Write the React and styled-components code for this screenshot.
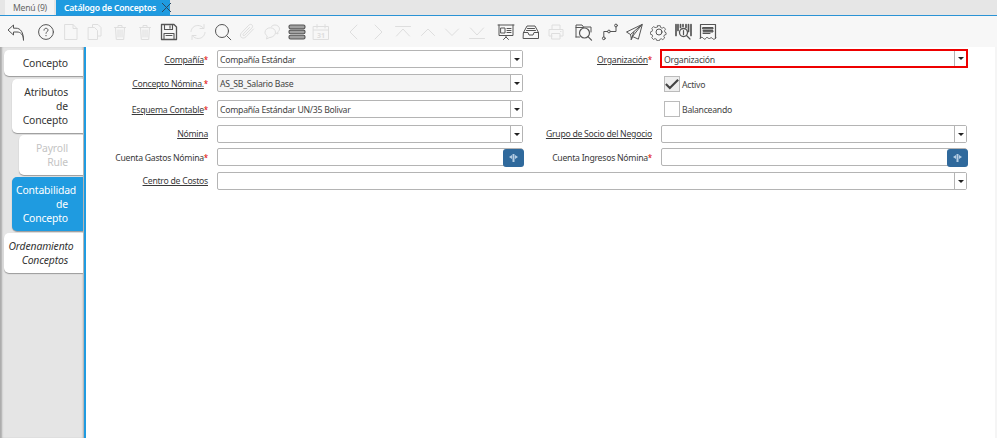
import React from "react";
import styled, { createGlobalStyle } from "styled-components";

const GlobalStyle = createGlobalStyle`
  html, body { margin: 0; padding: 0; height: 100%; background: #fff; overflow: hidden; }
  body { font-family: "Noto Sans", "Open Sans", sans-serif; color: #333; }
  #root { height: 438px; }
`;

const DARK = "#555";
const OFF = "#dedede";

const Svg = ({ on, size = 18, children }) => (
  <svg width={size} height={size} viewBox="0 0 18 18" fill="none" stroke={on ? DARK : OFF} strokeWidth="1" strokeLinecap="round" strokeLinejoin="round">
    {children}
  </svg>
);

const TOOLS = [
  { on: true, d: <path d="M16.500 17c0-5.500-3-8-6.500-8H6.500V12L1 7l5.500-5v3.200H9c4.500 0 7.500 4 7.500 11.800z" /> },
  { on: true, gap: 5.400, d: <><circle cx="9" cy="9" r="7.400" /><path d="M7 7.200c0-1.200 1-1.900 2-1.900s2 .7 2 1.800c0 1.600-2 1.600-2 3.200M9 12.400v.4" /></> },
  { d: <path d="M3 1.500h8l4 4v11H3zM11 1.500v4h4" /> },
  { d: <><path d="M6.500 4V1.500h5.500l3 3V13h-3" /><path d="M2.500 4.500h6l3 3v9h-9z" /></> },
  { d: <><path d="M3.500 4.500h11M7 4.500V2.500h4v2M4.500 4.500l.8 12h7.400l.8-12" /><path d="M7 7v7M9 7v7M11 7v7" /></> },
  { d: <><path d="M3.500 4.500h11M7 4.500V2.500h4v2M4.500 4.500l.8 12h7.400l.8-12" /><path d="M7 7v7M9 7v7M11 7v7" /></> },
  { on: true, d: <><path d="M1.500 1.500h12.500l2.500 2.500v12.500h-15z" strokeWidth="1.300" /><path d="M4.500 1.500v5h8v-5M10 2.800v2.400M4 16.500v-6h10v6M6 12.500h6" strokeWidth="1.100" /></> },
  { gap: 4.400, d: <><path d="M2 8.500C2.400 5 5.200 2.500 8.800 2.500c2.400 0 4.400 1 5.700 2.800M16 9.500c-.4 3.500-3.200 6-6.800 6-2.400 0-4.400-1-5.700-2.800" /><path d="M15 1.500v4h-4M3 16.500v-4h4" /></> },
  { on: true, d: <><circle cx="8" cy="8" r="6.500" /><path d="m12.800 12.800 4 4" /></> },
  { d: <path d="M15.500 6 8 13.800c-1.500 1.500-3.600 1.600-4.800.5-1.200-1.200-1-3.200.4-4.600l7.200-7.500c1-1 2.400-1.100 3.200-.3.9.9.7 2.200-.2 3.200L6.800 12.200c-.5.5-1.200.6-1.600.2-.4-.4-.3-1.100.2-1.600L11.500 4.500" /> },
  { d: <><path d="M6.500 14.500 3.500 16l.7-3C2.800 12 2 10.700 2 9.300 2 6.700 4.500 4.800 7.300 4.800s5.200 1.900 5.200 4.500-2.300 4.800-5.200 5.200z" /><path d="M8.500 3.400C9.400 2.500 10.700 2 12 2c2.500 0 4.500 1.700 4.500 3.900 0 1.300-.7 2.400-1.800 3.100l.3 2-2.200-1" /></> },
  { on: true, d: <><rect x="1" y="2" width="16" height="3.700" rx="1.500" fill="#a0a0a0" strokeWidth="1.100" /><rect x="1" y="7.100" width="16" height="3.700" rx="1.500" fill="#a0a0a0" strokeWidth="1.100" /><rect x="1" y="12.300" width="16" height="3.700" rx="1.500" fill="#a0a0a0" strokeWidth="1.100" /></> },
  { d: <><path d="M1.500 3.500h15v13h-15zM1.500 7h15M5 1.500v3.500M13 1.500v3.500" /><text x="9" y="14.800" fontSize="7" fontWeight="700" fill={OFF} stroke="none" textAnchor="middle">31</text></> },
  { gap: 8, d: <path d="M12 2 5 9l7 7" /> },
  { d: <path d="m6 2 7 7-7 7" /> },
  { d: <path d="M1.500 3.500h15M2.500 13 9 6l6.500 7" /> },
  { d: <path d="M2.500 12.500 9 6l6.500 6.500" /> },
  { d: <path d="M2.500 6 9 12.500 15.500 6" /> },
  { d: <path d="M1.500 15.500h15M2.500 5 9 12l6.500-7" /> },
  { on: true, gap: 5, d: <><path d="M1 2h16M2 2v10.500h14V2M9 12.500v1.500M6.500 16.500 9 14l2.500 2.500" /><path d="M4 5h4v5H4zM10 5.500h4M10 7.500h4M10 9.500h4" /></> },
  { on: true, d: <><path d="M1.500 9.500 5 3h8l3.500 6.500v6h-15z" /><path d="M1.500 9.500h4.500l1 2.500h4l1-2.500h4.500M5.500 5.500h7M4.500 7.500h9" /></> },
  { d: <><path d="M5 6V2h8v4M5 13H2V6.500h14V13h-3" /><path d="M5 10.500h8v5.500H5zM13.500 8.500h.5" /></> },
  { on: true, gap: 3.500, d: <><path d="M1 14V2h6l1.500 2H16v5M1 4.500h7.500" /><circle cx="9.500" cy="10" r="5" strokeWidth="1.200" /><path d="m13 13.700 3.500 3.500M1 14h3.500" strokeWidth="1.200" /></> },
  { on: true, gap: 1.500, d: <><circle cx="2.800" cy="15.300" r="1.400" /><circle cx="8" cy="8.500" r="1.400" /><circle cx="15" cy="2.500" r="1.400" /><path d="M2.800 13.900V8.500h3.800M9.400 8.500H15V3.900" /></> },
  { on: true, d: <><path d="M17 1.500 1.500 9l4 2.500L17 1.500 7.500 13.500l5.500 2.500zM5.500 11.500l1 5 1-3" /><path d="M9 9 6 16.500" /></> },
  { on: true, d: <><path d="M7.500 1.500h3l.5 2.200 1.800.8 2-1.100 2 2.300-1.200 1.800.5 1.800 1.400.7v2l-2 .6-.7 1.800 1 1.700-2.200 2-1.800-1-1.800.7-.5 1.600h-3l-.5-1.800-1.800-.7-1.800 1.100-2-2.200 1.100-1.800-.7-1.700-2-.6V9l2-.7.6-1.800-1-1.800 2.200-2 1.800 1.100L7 3.200z" transform="translate(1.400 1.400) scale(.84)" /><circle cx="9" cy="9" r="3" /></> },
  { on: true, d: <><path d="M1 1.500v11M3 1.500v6M5.500 1.500v3M8 1.500v2M11 1.500v3M13.500 1.500v7M16 1.500v11" strokeWidth="1.700" /><circle cx="8.500" cy="9.500" r="4" strokeWidth="1.300" /><path d="m11.500 12.500 3.500 3.500M8.500 7.500v4" strokeWidth="1.200" /></> },
  { on: true, d: <><path d="M1.500 15V1.500h15V15" strokeWidth="1.200" /><path d="M4 4.500h10v1.500H4zM4 7.500h10v1.500H4M4 10.500h7" fill="#777" /><path d="M1 15.500c1-1.600 2.500-1.600 3.500 0s2.500 0 3-1 2 1.500 3 1 2-1.500 3 0 2.500.5 3.500-.5" /></> },
];

const TABS = [
  { label: "Concepto", level: 0, height: 26 },
  { label: "Atributos de Concepto", level: 1, height: 54, gap: 3 },
  { label: "Payroll Rule", level: 2, height: 40, gap: 2, off: true },
  { label: "Contabilidad de Concepto", level: 1, height: 54, gap: 2, on: true },
  { label: "Ordenamiento Conceptos", level: 0, height: 40, gap: 2, italic: true },
];

const Page = styled.div`
  display: flex;
  flex-direction: column;
  width: 997px;
  height: 438px;
`;

const TabBar = styled.div`
  display: flex;
  align-items: stretch;
  height: 15px;
  padding-left: 5px;
  background: #e6e6e6;
  border-bottom: 1px solid #2a93d5;
`;

const WindowTab = styled.div`
  display: flex;
  align-items: center;
  padding: ${(p) => (p.$active ? "0 14px 0 8px" : "0 7px 0 8px")};
  margin-right: ${(p) => (p.$active ? 0 : "2px")};
  font-size: 8.6px;
  letter-spacing: -0.2px;
  font-weight: ${(p) => (p.$active ? 600 : 400)};
  color: ${(p) => (p.$active ? "#fff" : "#666")};
  background: ${(p) => (p.$active ? "#1f9be0" : "#f4f4f4")};
  white-space: nowrap;
`;

const CloseIcon = styled.svg`
  margin-left: -9px;
  align-self: center;
`;

const Toolbar = styled.div`
  display: flex;
  align-items: center;
  height: 31px;
  padding-left: 4px;
  background: #f7f7f7;
`;

const ToolButton = styled.span`
  flex: none;
  display: flex;
  align-items: center;
  justify-content: center;
  width: 24.6px;
  margin-left: ${(p) => p.$gap || 0}px;
`;

const Body = styled.div`
  flex: 1;
  display: flex;
  min-height: 0;
`;

const Sidebar = styled.nav`
  flex: none;
  box-sizing: border-box;
  display: flex;
  flex-direction: column;
  width: 86px;
  padding: 3px 0 0 4px;
  background: #e5e5e5;
  border-right: 2px solid #1f9be0;
  box-shadow: inset 3px 0 2px -1px #aaa, inset -2px 0 2px -1px #aaa;
`;

const SideTab = styled.div`
  box-sizing: border-box;
  flex: none;
  display: flex;
  align-items: center;
  justify-content: flex-end;
  width: ${(p) => 79 - p.$level * 7.5}px;
  height: ${(p) => p.$height}px;
  margin-top: ${(p) => p.$gap || 0}px;
  margin-left: ${(p) => p.$level * 7.5}px;
  padding: 0 15px 0 4.5px;
  text-align: right;
  font-size: 10.4px;
  letter-spacing: -0.15px;
  line-height: 14px;
  font-style: ${(p) => (p.$italic ? "italic" : "normal")};
  color: ${(p) => (p.$on ? "#fff" : p.$off ? "#c4c4c4" : "#333")};
  background: ${(p) => (p.$on ? "#1f9be0" : "#fff")};
  border-radius: 5px 0 0 5px;
  box-shadow: 0 1px 1px #999;

  span {
    display: block;
    width: 100%;
  }
`;

const Content = styled.main`
  flex: 1;
  display: flex;
`;

const Form = styled.div`
  flex: none;
  display: grid;
  width: 907px;
  height: 150px;
  padding: 3px 0 0 2px;
  grid-template-columns: 120px 306px 120px 306px;
  grid-template-rows: 24px 26px 25px 23px 24px 24px;
  column-gap: 9px;
  align-items: start;
  font-size: 8.7px;
  letter-spacing: -0.27px;
`;

const Strip = styled.div`
  flex: 1;
  background: #f5f5f5;
`;

const Label = styled.label`
  height: 18px;
  line-height: 19px;
  text-align: right;
  white-space: nowrap;
  color: #3a3a3a;

  u {
    text-underline-offset: 1px;
  }

  b {
    color: #e00000;
    font-size: 8px;
    font-weight: 400;
  }
`;

const Field = styled.div`
  box-sizing: border-box;
  display: flex;
  align-items: stretch;
  height: ${(p) => (p.$focus ? "19px" : "18px")};
  margin: ${(p) => (p.$focus ? "-1px -1px 0" : 0)};
  grid-column: ${(p) => (p.$wide ? "span 3" : "auto")};
  border: ${(p) => (p.$focus ? "2px solid #ee0000" : "1px solid #b4b4b4")};
  border-radius: ${(p) => (p.$focus ? 0 : "2px")};
  background: ${(p) => (p.$ro ? "#f4f4f4" : "#fff")};
`;

const Value = styled.span`
  flex: 1;
  padding-left: 2px;
  line-height: 18px;
  color: #444;
`;

const ArrowBox = styled.span`
  flex: none;
  display: flex;
  align-items: center;
  justify-content: center;
  width: 11px;
  background: #fff;
  border-left: 1px solid #b4b4b4;

  &::after {
    content: "";
    border: 3px solid transparent;
    border-top: 3px solid #222;
    border-bottom: 0;
  }
`;

const LookupButton = styled.span`
  flex: none;
  box-sizing: border-box;
  display: flex;
  align-items: center;
  justify-content: center;
  width: 21px;
  height: 18px;
  margin-right: -2px;
  background: #2f699c;
  border-radius: 3px;
`;

const CheckRow = styled.div`
  display: flex;
  align-items: center;
  gap: 2px;
  height: 16px;
  margin: ${(p) => p.$top}px 0 0 3px;
  color: #444;
`;

const CheckText = styled.span`
  padding-top: 2px;
`;

const Box = styled.span`
  box-sizing: border-box;
  flex: none;
  display: flex;
  align-items: center;
  justify-content: center;
  width: 16px;
  height: 16px;
  border: 1px solid #bbb;
  background: ${(p) => (p.$on ? "#eee" : "#fff")};
`;

const Required = ({ children, plain }) => (
  <Label>
    {plain ? children : <u>{children}</u>}
    <b>*</b>
  </Label>
);

const Combo = ({ value, ...rest }) => (
  <Field {...rest}>
    <Value>{value}</Value>
    <ArrowBox />
  </Field>
);

const Lookup = () => (
  <Field>
    <Value />
    <LookupButton>
      <svg width="9" height="8" viewBox="0 0 9 8" fill="#b4cde4">
        <path d="M3.500 0h2v8h-2zM3 1v4L0 3zM6 1v4l3-2z" />
      </svg>
    </LookupButton>
  </Field>
);

const Check = ({ on, top, children }) => (
  <CheckRow $top={top}>
    <Box $on={on}>
      {on && (
        <svg width="16" height="13" viewBox="0 0 16 13" fill="none" stroke="#444" strokeWidth="2.400">
          <path d="m1 6 4.500 4.500L15 1" />
        </svg>
      )}
    </Box>
    <CheckText>{children}</CheckText>
  </CheckRow>
);

export default function App() {
  return (
    <Page>
      <GlobalStyle />
      <TabBar>
        <WindowTab>Menú (9)</WindowTab>
        <WindowTab $active>Catálogo de Conceptos</WindowTab>
        <CloseIcon width="11" height="11" viewBox="0 0 11 11" stroke="#2c4a63" strokeWidth="1">
          <path d="m1 1 9 9M10 1l-9 9" />
        </CloseIcon>
      </TabBar>
      <Toolbar>
        {TOOLS.map((tool, i) => (
          <ToolButton key={i} $gap={tool.gap}>
            <Svg on={tool.on}>{tool.d}</Svg>
          </ToolButton>
        ))}
      </Toolbar>
      <Body>
        <Sidebar>
          {TABS.map((tab) => (
            <SideTab key={tab.label} $level={tab.level} $height={tab.height} $gap={tab.gap} $on={tab.on} $off={tab.off} $italic={tab.italic}>
              <span>{tab.label}</span>
            </SideTab>
          ))}
        </Sidebar>
        <Content>
          <Form>
            <Required>Compañía</Required>
            <Combo value="Compañía Estándar" />
            <Required>Organización</Required>
            <Combo value="Organización" $focus />

            <Required>Concepto Nómina.</Required>
            <Combo value="AS_SB_Salario Base" $ro />
            <span />
            <Check on top={2}>Activo</Check>

            <Required>Esquema Contable</Required>
            <Combo value="Compañía Estándar UN/35 Bolivar" />
            <span />
            <Check top={1}>Balanceando</Check>

            <Label><u>Nómina</u></Label>
            <Combo />
            <Label><u>Grupo de Socio del Negocio</u></Label>
            <Combo />

            <Required plain>Cuenta Gastos Nómina</Required>
            <Lookup />
            <Required plain>Cuenta Ingresos Nómina</Required>
            <Lookup />

            <Label><u>Centro de Costos</u></Label>
            <Combo $wide />
          </Form>
          <Strip />
        </Content>
      </Body>
    </Page>
  );
}
